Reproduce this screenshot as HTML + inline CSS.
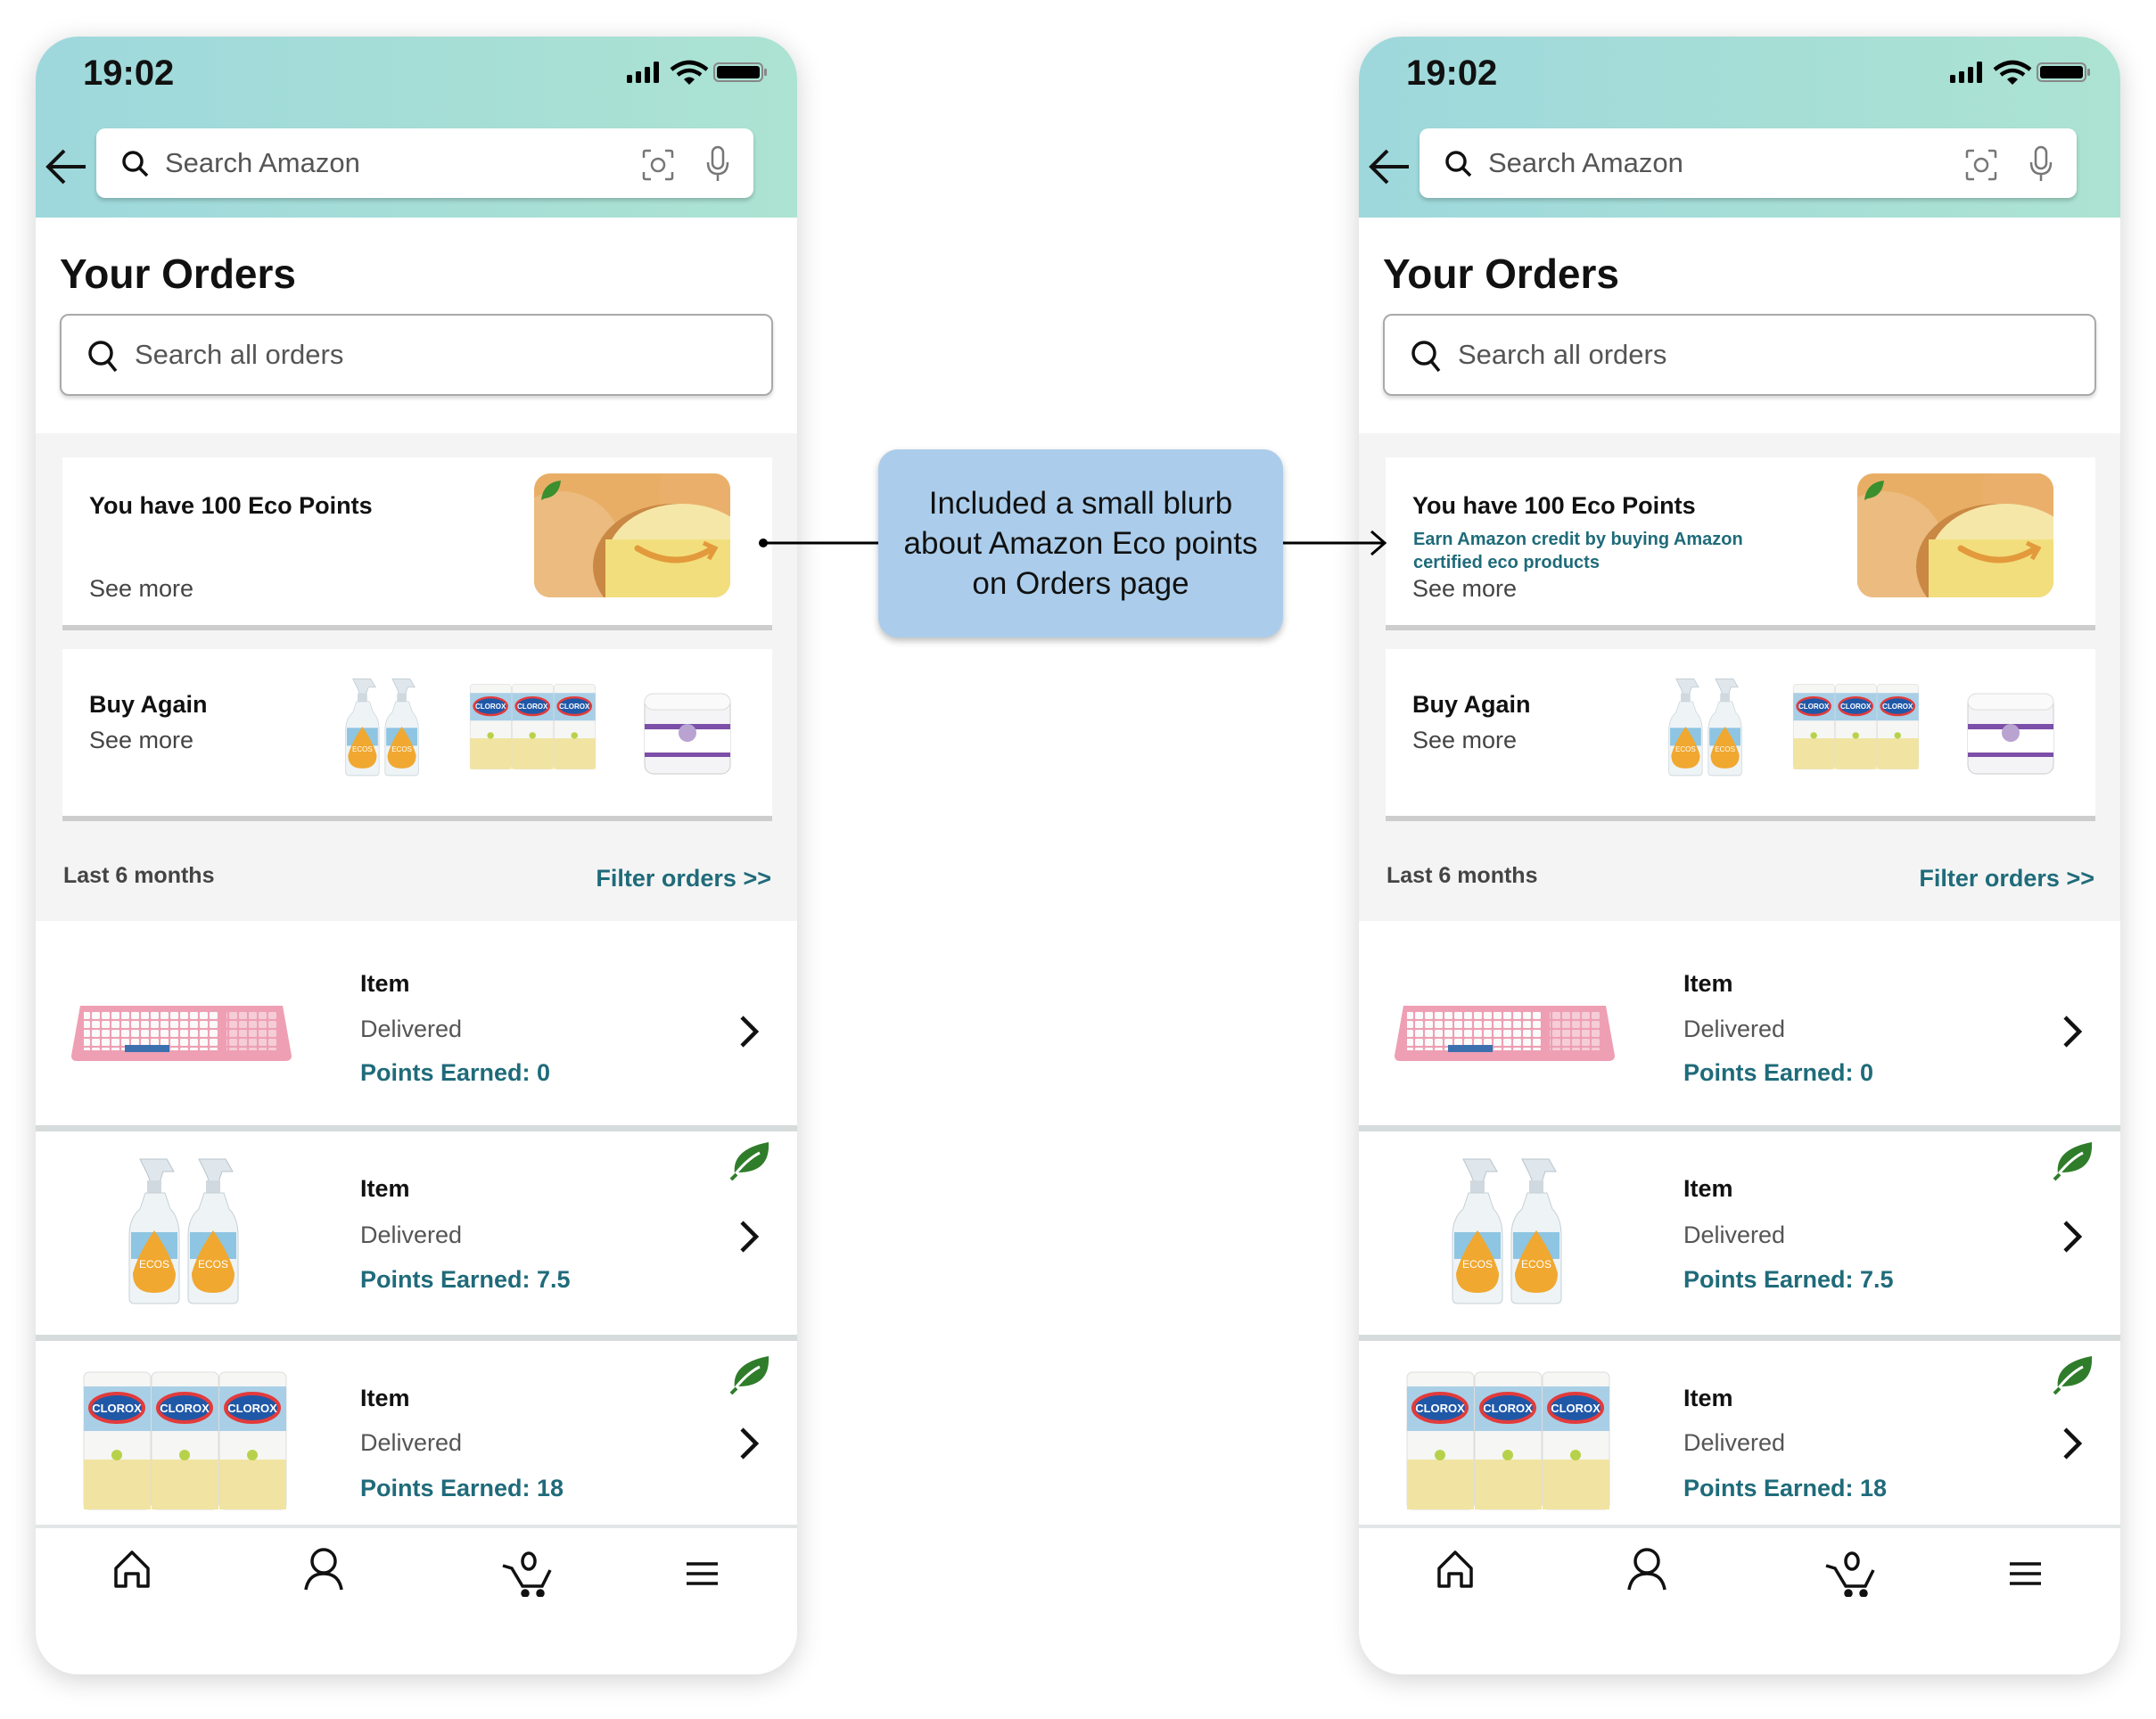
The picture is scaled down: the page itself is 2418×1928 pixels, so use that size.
<!DOCTYPE html>
<html><head><meta charset="utf-8">
<style>
*{margin:0;padding:0;box-sizing:border-box}
body{width:2418px;height:1928px;background:#fff;position:relative;overflow:hidden;font-family:"Liberation Sans",sans-serif;}
.ph{position:absolute;top:41px;width:854px;height:1837px;border-radius:48px;background:#fff;overflow:hidden;box-shadow:0 6px 30px rgba(0,0,0,0.18);}
.a{position:absolute;white-space:nowrap}
.hdr{position:absolute;left:0;top:0;width:854px;height:203px;background:linear-gradient(90deg,#9ed8dc,#ace3d2)}
.sb{position:absolute;left:68px;top:103px;width:737px;height:78px;background:#fff;border-radius:10px;box-shadow:0 3px 5px rgba(0,0,0,0.2)}
.gray{position:absolute;left:0;top:445px;width:854px;height:547px;background:#f4f4f4}
.card{position:absolute;left:30px;width:796px;background:#fff;border-bottom:6px solid #cdcdcd}
.t28{font-size:27px;line-height:32px}
.b{font-weight:bold}
.teal{color:#1f6b7a}
.row{position:absolute;left:0;width:854px;background:#fff}
.sep{position:absolute;left:0;width:854px;height:7px;background:#d6dbdb}
</style></head><body>

<!-- PHONE LEFT -->
<div class="ph" style="left:40px">
<div class="hdr"></div>
<div class="a" style="left:53px;top:17px;font-size:40px;line-height:48px;font-weight:bold;color:#111">19:02</div>
<svg class="a" style="left:663px;top:25px" width="160" height="30" viewBox="0 0 160 30">
<rect x="0" y="18" width="6" height="9" rx="1.5"/><rect x="10" y="14" width="6" height="13" rx="1.5"/><rect x="20" y="9" width="6" height="18" rx="1.5"/><rect x="30" y="3" width="6" height="24" rx="1.5"/>
<path d="M50 12 Q70 -4 90 12" fill="none" stroke="#000" stroke-width="4.5"/><path d="M57 18 Q70 8 83 18" fill="none" stroke="#000" stroke-width="4.5"/><path d="M64 23 L70 29 L76 23 Q70 18 64 23Z"/>
<rect x="98" y="5" width="54" height="20" rx="5" fill="none" stroke="#888" stroke-width="2"/><rect x="101" y="8" width="48" height="14" rx="3"/><rect x="154" y="11" width="3" height="8" rx="1" fill="#888"/>
</svg>
<svg class="a" style="left:10px;top:124px" width="50" height="44" viewBox="0 0 50 44"><path d="M46 22 H5 M22 4 L4 22 L22 40" fill="none" stroke="#111" stroke-width="4"/></svg>
<div class="sb"></div>
<svg class="a" style="left:96px;top:127px" width="32" height="32" viewBox="0 0 32 32"><circle cx="13" cy="13" r="10" fill="none" stroke="#111" stroke-width="3.5"/><path d="M20 20 L29 29" stroke="#111" stroke-width="3.5"/></svg>
<div class="a" style="left:145px;top:123px;font-size:31px;line-height:38px;color:#555">Search Amazon</div>
<svg class="a" style="left:680px;top:126px" width="36" height="36" viewBox="0 0 36 36" fill="none" stroke="#777" stroke-width="2.5"><path d="M2 10V4Q2 2 4 2H10M26 2H32Q34 2 34 4V10M34 26V32Q34 34 32 34H26M10 34H4Q2 34 2 32V26"/><circle cx="18" cy="18" r="7"/></svg>
<svg class="a" style="left:752px;top:122px" width="26" height="42" viewBox="0 0 26 42" fill="none" stroke="#777" stroke-width="2.5"><rect x="7" y="2" width="12" height="24" rx="6"/><path d="M2 19Q2 32 13 32Q24 32 24 19M13 32V40"/></svg>
<div class="a b" style="left:27px;top:239px;font-size:46px;line-height:54px;color:#111">Your Orders</div>
<div class="a" style="left:27px;top:311px;width:800px;height:92px;border:2px solid #a9a9a9;border-radius:10px;box-shadow:0 3px 4px rgba(0,0,0,0.15)"></div>
<svg class="a" style="left:58px;top:340px" width="36" height="38" viewBox="0 0 36 38"><circle cx="15" cy="15" r="12" fill="none" stroke="#111" stroke-width="3.5"/><path d="M23 24 L32 35" stroke="#111" stroke-width="3.5"/></svg>
<div class="a" style="left:111px;top:338px;font-size:31px;line-height:38px;color:#555">Search all orders</div>
<div class="gray"></div>
<div class="card" style="top:472px;height:194px"></div>
<svg class="a" style="left:559px;top:490px" width="220" height="139" viewBox="0 0 220 139"><defs><clipPath id="c1"><rect width="220" height="139" rx="18"/></clipPath></defs><g clip-path="url(#c1)"><rect width="220" height="139" fill="#e9ae66"/><circle cx="30" cy="90" r="70" fill="#ebbb80"/><circle cx="190" cy="20" r="50" fill="#eab06b"/><ellipse cx="156" cy="104" rx="90" ry="70" fill="#c98843"/><ellipse cx="166" cy="98" rx="85" ry="64" fill="#f5e7a8"/><path d="M80 74 H240 V170 H80Z" fill="#f2de7c"/><path d="M116 84 Q160 110 200 84" fill="none" stroke="#e39a3c" stroke-width="7" stroke-linecap="round"/><path d="M190 78 L203 84 L196 96" fill="none" stroke="#e39a3c" stroke-width="5"/><path d="M8 30 Q10 10 30 8 Q28 26 12 28Z" fill="#3a8f2e"/></g></svg>
<div class="a b t28" style="left:60px;top:510px;color:#111">You have 100 Eco Points</div>
<div class="a t28" style="left:60px;top:603px;color:#444">See more</div>
<div class="card" style="top:687px;height:193px"></div>
<div class="a b t28" style="left:60px;top:733px;color:#111">Buy Again</div>
<div class="a t28" style="left:60px;top:773px;color:#444">See more</div>
<svg class="a" style="left:341px;top:715px" width="97" height="118" viewBox="0 0 145 168"><g id="sp"><path d="M22 4H52L60 18H48L44 30H34L30 20Z" fill="#dfe7ec" stroke="#b8c4cc"/><rect x="30" y="28" width="16" height="14" fill="#cfd9df"/><path d="M28 42H50L56 60Q66 70 66 90V160Q66 166 60 166H16Q10 166 10 160V90Q10 70 22 60Z" fill="#eef3f6" stroke="#c6d0d6"/><rect x="12" y="86" width="52" height="30" fill="#8ec5e2"/><path d="M38 84Q20 110 14 132Q14 154 38 154Q62 154 62 132Q56 110 38 84Z" fill="#f0a830"/><text x="38" y="126" font-size="12" fill="#fff" text-anchor="middle" font-family="Liberation Sans">ECOS</text></g><use href="#sp" x="66"/></svg>
<svg class="a" style="left:486px;top:725px" width="143" height="98" viewBox="0 0 231 158"><g id="cx"><rect x="2" y="2" width="75" height="154" rx="6" fill="#f6f6f4" stroke="#ddd"/><rect x="2" y="18" width="75" height="50" fill="#a9cfe6"/><ellipse cx="39" cy="42" rx="30" ry="16" fill="#2058a8" stroke="#e23b3b" stroke-width="4"/><text x="39" y="47" font-size="13" font-weight="bold" fill="#fff" text-anchor="middle" font-family="Liberation Sans">CLOROX</text><rect x="2" y="100" width="75" height="56" fill="#f1e4a2"/><circle cx="39" cy="95" r="6" fill="#b7d24a"/></g><use href="#cx" x="76"/><use href="#cx" x="152"/></svg>
<svg class="a" style="left:679px;top:731px" width="104" height="100" viewBox="0 0 104 100"><rect x="4" y="6" width="96" height="90" rx="10" fill="#f4f4f6" stroke="#ccc"/><rect x="4" y="6" width="96" height="18" rx="10" fill="#fafafa" stroke="#ddd"/><rect x="4" y="42" width="96" height="30" fill="#fff"/><rect x="4" y="40" width="96" height="6" fill="#7c4fa8"/><rect x="4" y="72" width="96" height="5" fill="#7c4fa8"/><circle cx="52" cy="50" r="10" fill="#b9a3d1"/></svg>
<div class="a" style="left:31px;top:926px;font-size:25px;line-height:30px;color:#444;font-weight:bold">Last 6 months</div>
<div class="a b teal" style="right:29px;top:928px;font-size:27px;line-height:32px">Filter orders &gt;&gt;</div>
<div class="row" style="top:992px;height:229px"></div>
<div class="sep" style="top:1221px"></div>
<div class="row" style="top:1228px;height:228px"></div>
<div class="sep" style="top:1456px"></div>
<div class="row" style="top:1463px;height:206px"></div>
<div class="sep" style="top:1669px;height:4px;background:#e3e6e6"></div>
<svg class="a" style="left:40px;top:1083px" width="247" height="66" viewBox="0 0 247 66"><defs><pattern id="k1" width="11" height="10" patternUnits="userSpaceOnUse"><rect x="1" y="1" width="9" height="8" rx="1.5" fill="#fafafa"/></pattern></defs><path d="M10 4H237L247 60Q247 66 240 66H6Q0 66 0 60Z" fill="#ee9fb3"/><rect x="14" y="10" width="150" height="44" fill="url(#k1)"/><rect x="174" y="10" width="58" height="44" fill="url(#k1)" opacity=".5"/><rect x="60" y="48" width="50" height="8" fill="#3b6fae"/></svg>
<svg class="a" style="left:95px;top:1255px" width="145" height="168" viewBox="0 0 145 168"><use href="#sp"/><use href="#sp" x="66"/></svg>
<svg class="a" style="left:52px;top:1496px" width="231" height="158" viewBox="0 0 231 158"><use href="#cx"/><use href="#cx" x="76"/><use href="#cx" x="152"/></svg>
<div class="a b" style="left:364px;top:1045px;font-size:27px;line-height:34px;color:#111">Item</div>
<div class="a" style="left:364px;top:1096px;font-size:27px;line-height:34px;color:#555">Delivered</div>
<div class="a b teal" style="left:364px;top:1145px;font-size:27px;line-height:34px">Points Earned: 0</div>
<div class="a b" style="left:364px;top:1275px;font-size:27px;line-height:34px;color:#111">Item</div>
<div class="a" style="left:364px;top:1327px;font-size:27px;line-height:34px;color:#555">Delivered</div>
<div class="a b teal" style="left:364px;top:1377px;font-size:27px;line-height:34px">Points Earned: 7.5</div>
<div class="a b" style="left:364px;top:1510px;font-size:27px;line-height:34px;color:#111">Item</div>
<div class="a" style="left:364px;top:1560px;font-size:27px;line-height:34px;color:#555">Delivered</div>
<div class="a b teal" style="left:364px;top:1611px;font-size:27px;line-height:34px">Points Earned: 18</div>
<svg class="a" style="left:788px;top:1096px" width="24" height="40" viewBox="0 0 24 40"><path d="M4 4 L20 20 L4 36" fill="none" stroke="#111" stroke-width="4.5"/></svg>
<svg class="a" style="left:788px;top:1326px" width="24" height="40" viewBox="0 0 24 40"><path d="M4 4 L20 20 L4 36" fill="none" stroke="#111" stroke-width="4.5"/></svg>
<svg class="a" style="left:788px;top:1558px" width="24" height="40" viewBox="0 0 24 40"><path d="M4 4 L20 20 L4 36" fill="none" stroke="#111" stroke-width="4.5"/></svg>
<svg class="a" style="left:778px;top:1238px" width="48" height="46" viewBox="0 0 48 46"><path d="M6 38 Q2 10 44 2 Q46 36 10 36Z" fill="#2f7d2a"/><path d="M2 44 Q18 22 34 14" fill="none" stroke="#fff" stroke-width="3"/><path d="M2 44 L8 38" stroke="#2f7d2a" stroke-width="4"/></svg>
<svg class="a" style="left:778px;top:1478px" width="48" height="46" viewBox="0 0 48 46"><path d="M6 38 Q2 10 44 2 Q46 36 10 36Z" fill="#2f7d2a"/><path d="M2 44 Q18 22 34 14" fill="none" stroke="#fff" stroke-width="3"/><path d="M2 44 L8 38" stroke="#2f7d2a" stroke-width="4"/></svg>
<svg class="a" style="left:0;top:1680px" width="854" height="70" viewBox="0 0 854 70" fill="none" stroke="#111" stroke-width="3.5">
<path d="M90 38 L108 20 L126 38 V58 H115 V44 H101 V58 H90Z" stroke-linejoin="round"/>
<circle cx="323" cy="30" r="13"/><path d="M303 62 Q306 44 323 44 Q340 44 343 62"/>
<path d="M524 35 L534 38 L546 58 H568 L577 40"/><ellipse cx="553" cy="30" rx="7" ry="9"/><circle cx="549" cy="66" r="3" fill="#111"/><circle cx="566" cy="66" r="3" fill="#111"/>
<path d="M730 33 H765 M730 44 H765 M730 55 H765"/>
</svg>
</div>

<!-- PHONE RIGHT -->
<div class="ph" style="left:1524px">
<div class="hdr"></div>
<div class="a" style="left:53px;top:17px;font-size:40px;line-height:48px;font-weight:bold;color:#111">19:02</div>
<svg class="a" style="left:663px;top:25px" width="160" height="30" viewBox="0 0 160 30">
<rect x="0" y="18" width="6" height="9" rx="1.5"/><rect x="10" y="14" width="6" height="13" rx="1.5"/><rect x="20" y="9" width="6" height="18" rx="1.5"/><rect x="30" y="3" width="6" height="24" rx="1.5"/>
<path d="M50 12 Q70 -4 90 12" fill="none" stroke="#000" stroke-width="4.5"/><path d="M57 18 Q70 8 83 18" fill="none" stroke="#000" stroke-width="4.5"/><path d="M64 23 L70 29 L76 23 Q70 18 64 23Z"/>
<rect x="98" y="5" width="54" height="20" rx="5" fill="none" stroke="#888" stroke-width="2"/><rect x="101" y="8" width="48" height="14" rx="3"/><rect x="154" y="11" width="3" height="8" rx="1" fill="#888"/>
</svg>
<svg class="a" style="left:10px;top:124px" width="50" height="44" viewBox="0 0 50 44"><path d="M46 22 H5 M22 4 L4 22 L22 40" fill="none" stroke="#111" stroke-width="4"/></svg>
<div class="sb"></div>
<svg class="a" style="left:96px;top:127px" width="32" height="32" viewBox="0 0 32 32"><circle cx="13" cy="13" r="10" fill="none" stroke="#111" stroke-width="3.5"/><path d="M20 20 L29 29" stroke="#111" stroke-width="3.5"/></svg>
<div class="a" style="left:145px;top:123px;font-size:31px;line-height:38px;color:#555">Search Amazon</div>
<svg class="a" style="left:680px;top:126px" width="36" height="36" viewBox="0 0 36 36" fill="none" stroke="#777" stroke-width="2.5"><path d="M2 10V4Q2 2 4 2H10M26 2H32Q34 2 34 4V10M34 26V32Q34 34 32 34H26M10 34H4Q2 34 2 32V26"/><circle cx="18" cy="18" r="7"/></svg>
<svg class="a" style="left:752px;top:122px" width="26" height="42" viewBox="0 0 26 42" fill="none" stroke="#777" stroke-width="2.5"><rect x="7" y="2" width="12" height="24" rx="6"/><path d="M2 19Q2 32 13 32Q24 32 24 19M13 32V40"/></svg>
<div class="a b" style="left:27px;top:239px;font-size:46px;line-height:54px;color:#111">Your Orders</div>
<div class="a" style="left:27px;top:311px;width:800px;height:92px;border:2px solid #a9a9a9;border-radius:10px;box-shadow:0 3px 4px rgba(0,0,0,0.15)"></div>
<svg class="a" style="left:58px;top:340px" width="36" height="38" viewBox="0 0 36 38"><circle cx="15" cy="15" r="12" fill="none" stroke="#111" stroke-width="3.5"/><path d="M23 24 L32 35" stroke="#111" stroke-width="3.5"/></svg>
<div class="a" style="left:111px;top:338px;font-size:31px;line-height:38px;color:#555">Search all orders</div>
<div class="gray"></div>
<div class="card" style="top:472px;height:194px"></div>
<svg class="a" style="left:559px;top:490px" width="220" height="139" viewBox="0 0 220 139"><defs><clipPath id="c2"><rect width="220" height="139" rx="18"/></clipPath></defs><g clip-path="url(#c2)"><rect width="220" height="139" fill="#e9ae66"/><circle cx="30" cy="90" r="70" fill="#ebbb80"/><circle cx="190" cy="20" r="50" fill="#eab06b"/><ellipse cx="156" cy="104" rx="90" ry="70" fill="#c98843"/><ellipse cx="166" cy="98" rx="85" ry="64" fill="#f5e7a8"/><path d="M80 74 H240 V170 H80Z" fill="#f2de7c"/><path d="M116 84 Q160 110 200 84" fill="none" stroke="#e39a3c" stroke-width="7" stroke-linecap="round"/><path d="M190 78 L203 84 L196 96" fill="none" stroke="#e39a3c" stroke-width="5"/><path d="M8 30 Q10 10 30 8 Q28 26 12 28Z" fill="#3a8f2e"/></g></svg>
<div class="a b t28" style="left:60px;top:510px;color:#111">You have 100 Eco Points</div>
<div class="a b teal" style="left:61px;top:551px;font-size:20px;line-height:26px">Earn Amazon credit by buying Amazon<br>certified eco products</div>
<div class="a t28" style="left:60px;top:603px;color:#444">See more</div>
<div class="card" style="top:687px;height:193px"></div>
<div class="a b t28" style="left:60px;top:733px;color:#111">Buy Again</div>
<div class="a t28" style="left:60px;top:773px;color:#444">See more</div>
<svg class="a" style="left:341px;top:715px" width="97" height="118" viewBox="0 0 145 168"><use href="#sp"/><use href="#sp" x="66"/></svg>
<svg class="a" style="left:486px;top:725px" width="143" height="98" viewBox="0 0 231 158"><use href="#cx"/><use href="#cx" x="76"/><use href="#cx" x="152"/></svg>
<svg class="a" style="left:679px;top:731px" width="104" height="100" viewBox="0 0 104 100"><rect x="4" y="6" width="96" height="90" rx="10" fill="#f4f4f6" stroke="#ccc"/><rect x="4" y="6" width="96" height="18" rx="10" fill="#fafafa" stroke="#ddd"/><rect x="4" y="42" width="96" height="30" fill="#fff"/><rect x="4" y="40" width="96" height="6" fill="#7c4fa8"/><rect x="4" y="72" width="96" height="5" fill="#7c4fa8"/><circle cx="52" cy="50" r="10" fill="#b9a3d1"/></svg>
<div class="a" style="left:31px;top:926px;font-size:25px;line-height:30px;color:#444;font-weight:bold">Last 6 months</div>
<div class="a b teal" style="right:29px;top:928px;font-size:27px;line-height:32px">Filter orders &gt;&gt;</div>
<div class="row" style="top:992px;height:229px"></div>
<div class="sep" style="top:1221px"></div>
<div class="row" style="top:1228px;height:228px"></div>
<div class="sep" style="top:1456px"></div>
<div class="row" style="top:1463px;height:206px"></div>
<div class="sep" style="top:1669px;height:4px;background:#e3e6e6"></div>
<svg class="a" style="left:40px;top:1083px" width="247" height="66" viewBox="0 0 247 66"><defs><pattern id="k2" width="11" height="10" patternUnits="userSpaceOnUse"><rect x="1" y="1" width="9" height="8" rx="1.5" fill="#fafafa"/></pattern></defs><path d="M10 4H237L247 60Q247 66 240 66H6Q0 66 0 60Z" fill="#ee9fb3"/><rect x="14" y="10" width="150" height="44" fill="url(#k2)"/><rect x="174" y="10" width="58" height="44" fill="url(#k2)" opacity=".5"/><rect x="60" y="48" width="50" height="8" fill="#3b6fae"/></svg>
<svg class="a" style="left:95px;top:1255px" width="145" height="168" viewBox="0 0 145 168"><use href="#sp"/><use href="#sp" x="66"/></svg>
<svg class="a" style="left:52px;top:1496px" width="231" height="158" viewBox="0 0 231 158"><use href="#cx"/><use href="#cx" x="76"/><use href="#cx" x="152"/></svg>
<div class="a b" style="left:364px;top:1045px;font-size:27px;line-height:34px;color:#111">Item</div>
<div class="a" style="left:364px;top:1096px;font-size:27px;line-height:34px;color:#555">Delivered</div>
<div class="a b teal" style="left:364px;top:1145px;font-size:27px;line-height:34px">Points Earned: 0</div>
<div class="a b" style="left:364px;top:1275px;font-size:27px;line-height:34px;color:#111">Item</div>
<div class="a" style="left:364px;top:1327px;font-size:27px;line-height:34px;color:#555">Delivered</div>
<div class="a b teal" style="left:364px;top:1377px;font-size:27px;line-height:34px">Points Earned: 7.5</div>
<div class="a b" style="left:364px;top:1510px;font-size:27px;line-height:34px;color:#111">Item</div>
<div class="a" style="left:364px;top:1560px;font-size:27px;line-height:34px;color:#555">Delivered</div>
<div class="a b teal" style="left:364px;top:1611px;font-size:27px;line-height:34px">Points Earned: 18</div>
<svg class="a" style="left:788px;top:1096px" width="24" height="40" viewBox="0 0 24 40"><path d="M4 4 L20 20 L4 36" fill="none" stroke="#111" stroke-width="4.5"/></svg>
<svg class="a" style="left:788px;top:1326px" width="24" height="40" viewBox="0 0 24 40"><path d="M4 4 L20 20 L4 36" fill="none" stroke="#111" stroke-width="4.5"/></svg>
<svg class="a" style="left:788px;top:1558px" width="24" height="40" viewBox="0 0 24 40"><path d="M4 4 L20 20 L4 36" fill="none" stroke="#111" stroke-width="4.5"/></svg>
<svg class="a" style="left:778px;top:1238px" width="48" height="46" viewBox="0 0 48 46"><path d="M6 38 Q2 10 44 2 Q46 36 10 36Z" fill="#2f7d2a"/><path d="M2 44 Q18 22 34 14" fill="none" stroke="#fff" stroke-width="3"/><path d="M2 44 L8 38" stroke="#2f7d2a" stroke-width="4"/></svg>
<svg class="a" style="left:778px;top:1478px" width="48" height="46" viewBox="0 0 48 46"><path d="M6 38 Q2 10 44 2 Q46 36 10 36Z" fill="#2f7d2a"/><path d="M2 44 Q18 22 34 14" fill="none" stroke="#fff" stroke-width="3"/><path d="M2 44 L8 38" stroke="#2f7d2a" stroke-width="4"/></svg>
<svg class="a" style="left:0;top:1680px" width="854" height="70" viewBox="0 0 854 70" fill="none" stroke="#111" stroke-width="3.5">
<path d="M90 38 L108 20 L126 38 V58 H115 V44 H101 V58 H90Z" stroke-linejoin="round"/>
<circle cx="323" cy="30" r="13"/><path d="M303 62 Q306 44 323 44 Q340 44 343 62"/>
<path d="M524 35 L534 38 L546 58 H568 L577 40"/><ellipse cx="553" cy="30" rx="7" ry="9"/><circle cx="549" cy="66" r="3" fill="#111"/><circle cx="566" cy="66" r="3" fill="#111"/>
<path d="M730 33 H765 M730 44 H765 M730 55 H765"/>
</svg>
</div>

<!-- connectors (on top) -->
<svg class="a" style="left:0;top:0" width="2418" height="1928">
<circle cx="856" cy="609" r="5" fill="#000"/>
<line x1="856" y1="609" x2="986" y2="609" stroke="#000" stroke-width="3"/>
<line x1="1438" y1="609" x2="1552" y2="609" stroke="#000" stroke-width="3"/>
<path d="M1538 596 L1553 609 L1538 622" fill="none" stroke="#000" stroke-width="3"/>
</svg>
<div class="a" style="left:985px;top:504px;width:454px;height:211px;background:#abcdeb;border-radius:22px;box-shadow:0 4px 8px rgba(0,0,0,0.25);display:flex;align-items:center;justify-content:center;text-align:center;font-size:35px;line-height:45px;color:#111;white-space:normal">Included a small blurb<br>about Amazon Eco points<br>on Orders page</div>
</body></html>
